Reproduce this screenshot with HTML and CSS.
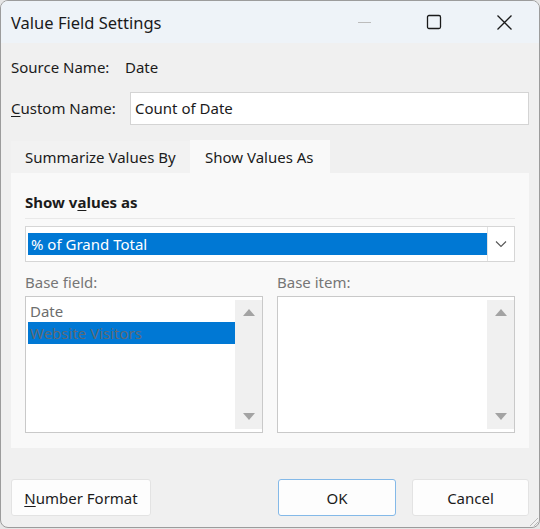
FILE: index.html
```html
<!DOCTYPE html>
<html lang="en">
<head>
    <meta charset="UTF-8">
    <title>Value Field Settings</title>
    <link rel="stylesheet" href="styles.css">
</head>
<body>
    <div class="window">
        <!-- title bar -->
        <div class="titlebar">
            <span class="title">Value Field Settings</span>
            <div class="controls">
                <span class="ctl"><span class="dash"></span></span>
                <span class="ctl">
                    <svg width="16" height="16" viewBox="0 0 16 16"><rect x="1.5" y="1.5" width="13" height="13" rx="1.5" fill="none" stroke="#1a1a1a" stroke-width="1.3"/></svg>
                </span>
                <span class="ctl">
                    <svg width="17" height="17" viewBox="0 0 17 17"><path d="M1.5 1.5 L15.5 15.5 M15.5 1.5 L1.5 15.5" stroke="#1a1a1a" stroke-width="1.3"/></svg>
                </span>
            </div>
        </div>

        <div class="body">
            <div class="row source-row">
                <span class="label-source">Source Name:</span>
                <span>Date</span>
            </div>
            <div class="row name-row">
                <span class="label-name"><u>C</u>ustom Name:</span>
                <div class="textbox">Count of Date</div>
            </div>

            <!-- tabs -->
            <div class="tabs">
                <div class="tab tab-first">Summarize Values By</div>
                <div class="tab active">Show Values As</div>
            </div>
            <div class="panel">
                <div class="section-title">Show v<u>a</u>lues as</div>
                <div class="combo">
                    <div class="combo-value">% of Grand Total</div>
                    <div class="combo-btn">
                        <svg width="12" height="8" viewBox="0 0 12 8"><path d="M1 1.5 L6 6.5 L11 1.5" fill="none" stroke="#555" stroke-width="1.1"/></svg>
                    </div>
                </div>
                <div class="lists">
                    <div class="list-col">
                        <div class="list-label">Base field:</div>
                        <div class="listbox">
                            <div class="items">
                                <div class="item">Date</div>
                                <div class="item selected">Website Visitors</div>
                            </div>
                            <div class="scroll">
                                <span class="arrow up"></span>
                                <span class="arrow down"></span>
                            </div>
                        </div>
                    </div>
                    <div class="list-col">
                        <div class="list-label">Base item:</div>
                        <div class="listbox">
                            <div class="items"></div>
                            <div class="scroll">
                                <span class="arrow up"></span>
                                <span class="arrow down"></span>
                            </div>
                        </div>
                    </div>
                </div>
            </div>

            <!-- buttons -->
            <div class="footer">
                <button class="btn btn-wide"><u>N</u>umber Format</button>
                <div class="footer-right">
                    <button class="btn btn-ok focus">OK</button>
                    <button class="btn">Cancel</button>
                </div>
            </div>
        </div>
        <div class="grip"></div>
    </div>
</body>
</html>
```

FILE: styles.css
```css
body {
    margin: 0;
    background: #e6e6e6;
    font-family: "Noto Sans", "Open Sans", sans-serif;
    font-size: 15px;
    color: #1b1b1b;
}

.window {
    position: relative;
    width: 540px;
    height: 528px;
    box-sizing: border-box;
    border: 1px solid #9c9c9c;
    border-radius: 8px;
    background: #f0f0f0;
    overflow: hidden;
}

/* title bar */
.titlebar {
    height: 42px;
    background: #eef3f8;
    display: flex;
    align-items: center;
    justify-content: space-between;
    padding-left: 10px;
}

.title {
    font-size: 16.5px;
    color: #1a1a1a;
}

.controls {
    display: flex;
    height: 100%;
}

.ctl {
    width: 70px;
    display: flex;
    align-items: center;
    justify-content: center;
}

.dash {
    width: 13px;
    height: 1px;
    background: #bcbcbc;
}

/* body */
.body {
    padding: 0 10px;
}

.row {
    display: flex;
    align-items: center;
}

.label-source {
    width: 114px;
}

.label-name {
    width: 119px;
}

.source-row {
    height: 48px;
}

.name-row {
    height: 34px;
}

.textbox {
    flex: 1;
    height: 33px;
    border: 1px solid #d4d4d4;
    background: #fff;
    display: flex;
    align-items: center;
    padding-left: 4px;
    box-sizing: border-box;
}

u {
    text-decoration-thickness: 1px;
    text-underline-offset: 2px;
}

/* tabs */
.tabs {
    display: flex;
    margin-top: 15px;
    height: 33px;
}

.tab {
    padding-left: 14px;
    display: flex;
    align-items: center;
    box-sizing: border-box;
}

.tab-first {
    width: 179px;
    background: #f2f2f2;
    margin-top: 1px;
}

.tab.active {
    width: 140px;
    background: #f9f9f9;
    padding-left: 15px;
}

.panel {
    background: #f9f9f9;
    height: 275px;
    box-sizing: border-box;
    padding: 14px 14px 0 14px;
}

.section-title {
    font-weight: bold;
    height: 31px;
    line-height: 31px;
    border-bottom: 1px solid #e9e9e9;
}

.combo {
    margin-top: 7px;
    height: 36px;
    border: 1px solid #d6d6d6;
    background: #fff;
    display: flex;
    align-items: center;
    box-sizing: border-box;
    padding-left: 2px;
}

.combo-value {
    flex: 1;
    height: 22px;
    background: #0078d4;
    color: #fff;
    line-height: 22px;
    padding-left: 3px;
}

.combo-btn {
    width: 27px;
    height: 34px;
    box-sizing: border-box;
    border-left: 1px solid #e2e2e2;
    display: flex;
    align-items: center;
    justify-content: center;
}

.lists {
    display: flex;
    gap: 14px;
    margin-top: 8px;
}

.list-col {
    width: 238px;
}

.list-label {
    color: #767676;
    height: 26px;
    line-height: 24px;
}

.listbox {
    height: 137px;
    border: 1px solid #c9c9c9;
    background: #fff;
    box-sizing: border-box;
    display: flex;
    padding: 3px 0 3px 2px;
}

.items {
    flex: 1;
}

.item {
    height: 22px;
    line-height: 22px;
    padding-left: 2px;
    color: #6d6d6d;
}

.item.selected {
    background: #0078d4;
    color: #5f6a74;
}

.scroll {
    width: 27px;
    background: #f0f0f0;
    display: flex;
    flex-direction: column;
    justify-content: space-between;
    align-items: center;
    padding: 9px 0 9px;
}

.arrow {
    width: 0;
    height: 0;
    border-left: 6px solid transparent;
    border-right: 6px solid transparent;
}

.arrow.up {
    border-bottom: 7px solid #a3a3a3;
}

.arrow.down {
    border-top: 7px solid #a3a3a3;
}

/* footer */
.footer {
    display: flex;
    justify-content: space-between;
    margin-top: 31px;
}

.footer-right {
    display: flex;
    gap: 16px;
}

.btn {
    font-family: inherit;
    font-size: 15px;
    color: #1b1b1b;
    background: #fdfdfd;
    border: 1px solid #e3e3e3;
    border-radius: 3px;
    width: 117px;
    height: 37px;
}

.btn-ok {
    width: 118px;
}

.btn-wide {
    width: 140px;
}

.btn.focus {
    border-color: #84b9e8;
}

.grip {
    position: absolute;
    right: 1px;
    bottom: 1px;
    width: 10px;
    height: 10px;
    background: repeating-linear-gradient(135deg, transparent 0 2px, #b9b9b9 2px 3px);
    clip-path: polygon(100% 0, 100% 100%, 0 100%);
}
```
